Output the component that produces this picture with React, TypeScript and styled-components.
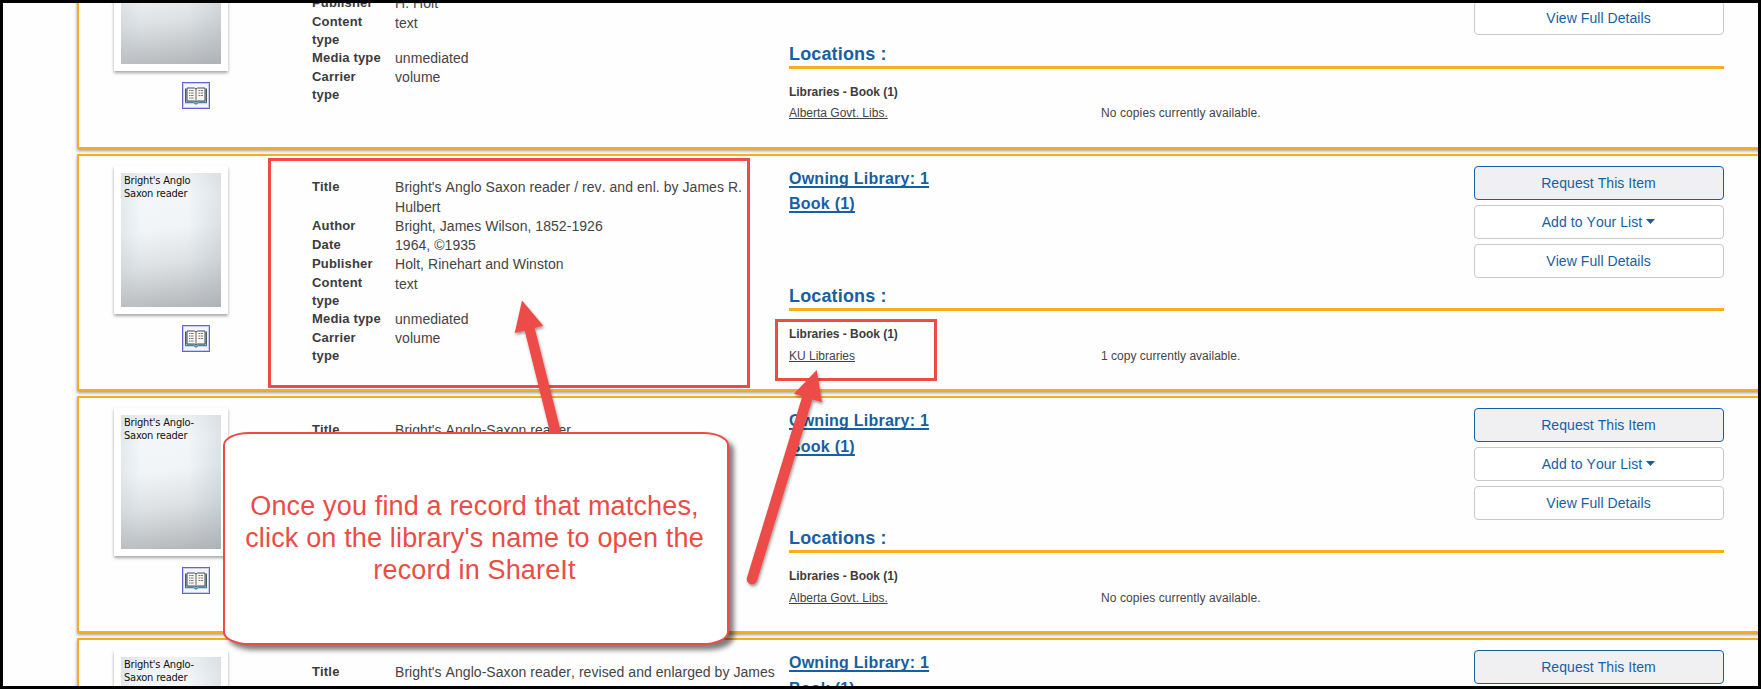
import React from "react";
import styled, { createGlobalStyle } from "styled-components";

const amber = "#f8ae1c";
const blue = "#165fa3";
const red = "#ec4b46";
const ink = "#444";

const GlobalStyle = createGlobalStyle`
  * { box-sizing: border-box; }
  body {
    margin: 0;
    background: #fff;
    color: ${ink};
    font-family: "Liberation Sans", Arial, sans-serif;
    font-size: 14px;
    font-kerning: none;
  }
`;

const Frame = styled.div`
  position: relative;
  width: 1761px;
  height: 689px;
  border: 3px solid #000;
  overflow: hidden;
  background: #fefefe;
`;

const Results = styled.div`
  display: flex;
  flex-direction: column;
  gap: 5px;
  width: 1720px;
  margin: -91px 0 0 74px;
`;

const Card = styled.article<{ $lift: number }>`
  display: flex;
  flex: none;
  height: 237px;
  border: 2px solid ${amber};
  background: #fefefe;
  box-shadow: 0 2px 3px rgba(0, 0, 0, 0.38);
  --lift: ${(p) => p.$lift}px;
`;

const Media = styled.div`
  flex: none;
  width: 233px;
  padding: calc(10px - var(--lift)) 0 0 35px;
`;

const Cover = styled.div`
  width: 114px;
  height: 148px;
  padding: 7px;
  background: #fff;
  box-shadow: 0 2px 3px rgba(0, 0, 0, 0.35);
`;

const CoverArt = styled.div`
  width: 100px;
  height: 134px;
  padding: 2px 3px;
  background:
    linear-gradient(90deg, rgba(175, 185, 190, 0.22), transparent 20%, transparent 66%, rgba(165, 175, 180, 0.28)),
    linear-gradient(172deg, #e9edf0 0%, #f3f7fa 22%, #f0f4f7 42%, #dde1e4 66%, #c3c6c9 86%, #b1b4b7 100%);
  color: #111;
  font: 11px/12.5px "DejaVu Sans Condensed", "DejaVu Sans", sans-serif;
  letter-spacing: -0.2px;
`;

const BookFrame = styled.div`
  width: 28px;
  height: 27px;
  margin: 11px 0 0 68px;
  border: 1px solid #6664cc;
  box-shadow: inset 0 0 0 1px #c9cbf0;
  background: #f2f6fb;
  svg { display: block; }
`;

const Details = styled.dl<{ $shift: number }>`
  display: grid;
  flex: none;
  grid-template-columns: 83px 385px;
  align-content: start;
  width: 477px;
  margin: 0;
  padding-top: ${(p) => 22 + p.$shift}px;
`;

const Label = styled.dt`
  width: 74px;
  color: #3c3c3c;
  font-weight: 700;
  font-size: 13px;
  line-height: 18px;
  letter-spacing: 0.16px;
`;

const Value = styled.dd<{ $lines: number; $leading: number }>`
  height: ${(p) => (p.$lines > 1 ? 36 : 19)}px;
  margin: 0;
  line-height: ${(p) => p.$leading}px;
  letter-spacing: 0.05px;
`;

const TitleValue = styled.dd`
  margin: -1px 0 0;
  line-height: 20px;
  letter-spacing: 0.05px;
`;

const Holdings = styled.section`
  flex: none;
  width: 935px;
`;

const Summary = styled.div`
  display: flex;
  justify-content: space-between;
  height: 128px;
`;

const OwningLinks = styled.div<{ $leading: number }>`
  display: flex;
  flex-direction: column;
  align-items: flex-start;
  padding-top: 10px;
  line-height: ${(p) => p.$leading}px;
`;

const OwningLink = styled.a`
  color: ${blue};
  font-size: 16px;
  font-weight: 700;
  letter-spacing: 0.24px;
  text-decoration: underline;
  text-decoration-thickness: 2px;
  text-underline-offset: 2px;
  text-decoration-skip-ink: none;
`;

const Actions = styled.div`
  display: flex;
  flex-direction: column;
  gap: 5px;
  width: 250px;
  padding-top: calc(10px - var(--lift));
`;

const ActionButton = styled.button<{ $primary?: boolean }>`
  display: flex;
  flex: none;
  align-items: center;
  justify-content: center;
  gap: 4px;
  height: 34px;
  padding: 0 1px 1px 0;
  border: 1px solid ${(p) => (p.$primary ? blue : "#c9c9c9")};
  border-radius: 4px;
  background: ${(p) => (p.$primary ? "#f0f0f2" : "#fff")};
  color: ${blue};
  font: 14px "Liberation Sans", Arial, sans-serif;
  font-kerning: none;
  letter-spacing: 0.06px;
`;

const LocationsHeading = styled.h3`
  height: 27px;
  margin: 0;
  padding-top: 2px;
  border-bottom: 3px solid ${amber};
  color: ${blue};
  font-size: 18px;
  line-height: 21px;
  letter-spacing: 0.15px;
`;

const LocationGroup = styled.h4`
  margin: 15px 0 0;
  color: #3c3c3c;
  font-size: 12px;
  line-height: 16px;
  letter-spacing: -0.03px;
`;

const LocationRow = styled.div`
  display: grid;
  grid-template-columns: 312px 1fr;
  margin-top: calc(6px - var(--lift));
  font-size: 12px;
  line-height: 16px;
`;

const LibraryLink = styled.a`
  justify-self: start;
  text-decoration: underline;
  text-decoration-skip-ink: none;
  text-underline-offset: 1px;
`;

const Availability = styled.span<{ $tracking: number }>`
  letter-spacing: ${(p) => p.$tracking}px;
`;

const Markup = styled.svg`
  position: absolute;
  inset: -3px;
  width: 1761px;
  height: 689px;
`;

const Callout = styled.div`
  position: absolute;
  left: 219.5px;
  top: 428.5px;
  display: flex;
  align-items: center;
  justify-content: center;
  width: 506px;
  height: 213.5px;
  padding: 0 2px 1.5px 0;
  border: 2px solid ${red};
  border-radius: 26px / 13px;
  background: #fff;
  box-shadow: 5px 5px 5px rgba(0, 0, 0, 0.5);
  color: ${red};
  font-size: 27px;
  line-height: 32px;
  letter-spacing: 0.16px;
  text-align: center;
`;

function Caret() {
  return (
    <svg width="9" height="5" viewBox="0 0 9 5">
      <path d="M0 0H9L4.500 5z" fill={blue} />
    </svg>
  );
}

function BookIcon() {
  return (
    <svg width="26" height="25" viewBox="0 0 26 25">
      <path d="M2 6h22v14.500h-8.500L13 22l-2.500-1.500H2z" fill="#8cbfdc" />
      <path d="M2.500 5.500v13.500M23.500 5.500v13.500" stroke="#4b5c68" />
      <path d="M2 19.500h8.500L13 21l2.500-1.500H24" fill="none" stroke="#4d7f9e" />
      <path d="M4 5h7.500L13 6l1.500-1H22v13h-7.500l-1.500 1-1.500-1H4z" fill="#f6f5f2" stroke="#4c4c4c" />
      <path d="M13 6v12.500" stroke="#666" />
      <path d="M6 7.500h4.500M6 10h4.500M6 12.500h4.500M6 15h4.500M15.500 7.500H20M15.500 10H20M15.500 12.500H20" stroke="#777" strokeDasharray="1.500 .6 3 .5" />
    </svg>
  );
}

type RecordData = {
  cover: string;
  title: string;
  author: string;
  date: string;
  publisher: string;
  library: string;
  status: string;
  lift?: number;
  shift?: number;
  leading?: number;
  tracking?: number;
};

const records: RecordData[] = [
  { cover: "Bright's Anglo-Saxon reader", title: "Bright's Anglo-Saxon reader", author: "Bright, James Wilson, 1852-1926", date: "1935", publisher: "H. Holt", library: "Alberta Govt. Libs.", status: "No copies currently available.", lift: 1, shift: 1 },
  { cover: "Bright's Anglo Saxon reader", title: "Bright's Anglo Saxon reader / rev. and enl. by James R. Hulbert", author: "Bright, James Wilson, 1852-1926", date: "1964, ©1935", publisher: "Holt, Rinehart and Winston", library: "KU Libraries", status: "1 copy currently available.", leading: 25, tracking: 0.02 },
  { cover: "Bright's Anglo-Saxon reader", title: "Bright's Anglo-Saxon reader", author: "Bright, James Wilson, 1852-1926", date: "1935", publisher: "H. Holt", library: "Alberta Govt. Libs.", status: "No copies currently available.", shift: 1 },
  { cover: "Bright's Anglo-Saxon reader", title: "Bright's Anglo-Saxon reader, revised and enlarged by James R. Hulbert", author: "Bright, James Wilson, 1852-1926", date: "1935", publisher: "H. Holt", library: "Alberta Govt. Libs.", status: "No copies currently available.", shift: 1 },
];

type FieldProps = { label: string; value: string; lines?: number; leading?: number };

function Field({ label, value, lines = 1, leading = 18 }: FieldProps) {
  return (
    <>
      <Label>{label}</Label>
      <Value $lines={lines} $leading={leading}>{value}</Value>
    </>
  );
}

function ResultCard({ record }: { record: RecordData }) {
  const { lift = 0, shift = 0, leading = 25.5, tracking = 0.1 } = record;
  return (
    <Card $lift={lift}>
      <Media>
        <Cover>
          <CoverArt>{record.cover}</CoverArt>
        </Cover>
        <BookFrame>
          <BookIcon />
        </BookFrame>
      </Media>
      <Details $shift={shift}>
        <Label>Title</Label>
        <TitleValue>{record.title}</TitleValue>
        <Field label="Author" value={record.author} />
        <Field label="Date" value={record.date} />
        <Field label="Publisher" value={record.publisher} />
        <Field label="Content type" value="text" lines={2} leading={20} />
        <Field label="Media type" value="unmediated" />
        <Field label="Carrier type" value="volume" lines={2} />
      </Details>
      <Holdings>
        <Summary>
          <OwningLinks $leading={leading}>
            <OwningLink>Owning Library: 1</OwningLink>
            <OwningLink>Book (1)</OwningLink>
          </OwningLinks>
          <Actions>
            <ActionButton $primary>Request This Item</ActionButton>
            <ActionButton>
              Add to Your List <Caret />
            </ActionButton>
            <ActionButton>View Full Details</ActionButton>
          </Actions>
        </Summary>
        <LocationsHeading>Locations :</LocationsHeading>
        <LocationGroup>Libraries - Book (1)</LocationGroup>
        <LocationRow>
          <LibraryLink>{record.library}</LibraryLink>
          <Availability $tracking={tracking}>{record.status}</Availability>
        </LocationRow>
      </Holdings>
    </Card>
  );
}

export default function App() {
  return (
    <>
      <GlobalStyle />
      <Frame>
        <Results>
          {records.map((record, i) => (
            <ResultCard key={i} record={record} />
          ))}
        </Results>
        <Markup viewBox="0 0 1761 689">
          <defs>
            <filter id="drop" x="-20%" y="-20%" width="150%" height="150%">
              <feDropShadow dx="1" dy="2" stdDeviation="1.5" floodOpacity="0.4" />
            </filter>
          </defs>
          <g fill="none" stroke={red} strokeWidth="3">
            <rect x="269.5" y="159.500" width="479" height="227" />
            <rect x="776.5" y="320.500" width="159" height="59" />
          </g>
          <g fill={red} filter="url(#drop)">
            <path d="M522 300.500L543.300 325.700L534.700 328L563 440H552L524.700 330.700L514.700 333Z" />
            <path d="M816.700 370L822 402.300L812.400 399.500L757.200 580.600A5.300 5.300 0 0 1 747 577.600L802.300 396.300L794 393.700Z" />
          </g>
        </Markup>
        <Callout>
          Once you find a record that matches,
          <br />
          click on the library's name to open the
          <br />
          record in ShareIt
        </Callout>
      </Frame>
    </>
  );
}
